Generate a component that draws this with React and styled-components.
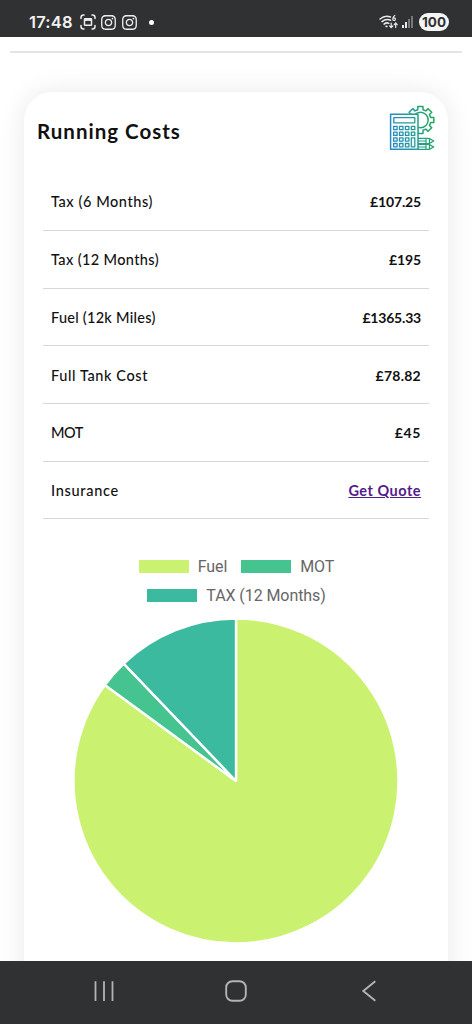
import React from 'react';
import styled, { createGlobalStyle } from 'styled-components';
import { FaInstagram } from 'react-icons/fa';

const costs = [
    { label: 'Tax (6 Months)', track: 0.57, value: '£107.25', valueTrack: -0.15 },
    { label: 'Tax (12 Months)', track: 0.37, value: '£195', valueTrack: -0.1 },
    { label: 'Fuel (12k Miles)', track: 0.26, value: '£1365.33', valueTrack: -0.2 },
    { label: 'Full Tank Cost', track: 0.6, value: '£78.82', valueTrack: 0.25 },
    { label: 'MOT', track: -0.5, value: '£45', valueTrack: 0.6 },
    { label: 'Insurance', track: 0.7, value: 'Get Quote', link: true },
];

const slices = [
    { label: 'Fuel', amount: 1365.33, color: '#caf270' },
    { label: 'MOT', amount: 45, color: '#45c490' },
    { label: 'TAX (12 Months)', amount: 195, color: '#3cba9f' },
];

const point = (cx, cy, r, a) => `${(cx + r * Math.sin(a)).toFixed(2)} ${(cy - r * Math.cos(a)).toFixed(2)}`;

const Pie = () => {
    const total = slices.reduce((sum, s) => sum + s.amount, 0);
    let start = 0;
    return (
        <PieSvg viewBox='0 0 326 326'>
            {slices.map((s) => {
                const end = start + (s.amount / total) * Math.PI * 2;
                const large = end - start > Math.PI ? 1 : 0;
                const d = `M163 163 L${point(163, 163, 162.5, start)} A162.5 162.5 0 ${large} 1 ${point(163, 163, 162.5, end)} Z`;
                start = end;
                return <path key={s.label} d={d} fill={s.color} stroke='#fff' strokeWidth='2.4' strokeLinejoin='bevel' />;
            })}
        </PieSvg>
    );
};

// eight teeth, four points for each
const gearPath = () => {
    const pts = [];
    for (let i = 0; i < 8; i++) {
        const a = (i * Math.PI) / 4;
        pts.push(point(32.4, 16, 10.6, a - 0.25));
        pts.push(point(32.4, 16, 13.7, a - 0.19));
        pts.push(point(32.4, 16, 13.7, a + 0.19));
        pts.push(point(32.4, 16, 10.6, a + 0.25));
    }
    return `M${pts.join(' L')} Z`;
};

const CalculatorIcon = () => (
    <CalcSvg viewBox='0 0 48 48'>
        <defs>
            <linearGradient id='calc' gradientUnits='userSpaceOnUse' x1='2' y1='30' x2='46' y2='22'>
                <stop offset='0' stopColor='#2688c4' />
                <stop offset='0.55' stopColor='#229e96' />
                <stop offset='1' stopColor='#25a95c' />
            </linearGradient>
        </defs>
        <g fill='none' stroke='url(#calc)' strokeWidth='1.5' strokeLinejoin='round'>
            <path d={gearPath()} />
            <circle cx='32.4' cy='16' r='7.8' />
            <rect x='2.6' y='10.3' width='27.4' height='34.9' fill='#fff' />
            <rect x='5.8' y='13.6' width='21' height='5.2' strokeWidth='1.3' />
            {[0, 1, 2, 3].map((r) => [0, 1, 2, 3].map((c) => (
                c === 3 && r > 1 ? null :
                    <rect key={`${r}-${c}`} x={5.6 + c * 5.9} y={22.4 + r * 5.7} width='3.5' height='3.3' strokeWidth='1.3' />
            )))}
            <rect x='23.3' y='33.8' width='3.5' height='9' strokeWidth='1.3' />
            <path d='M30 34.4 H41 L45.8 37 L41 39.6 H30 M30 37 H38 M38 34.4 V39.6 M41.4 34.8 V39.2' strokeWidth='1.2' />
            <path d='M30 40.4 H41 L45.8 43 L41 45.4 H30 M30 43 H38 M38 40.4 V45.4 M41.4 40.8 V45' strokeWidth='1.2' />
        </g>
    </CalcSvg>
);

const App = () => {
    return (
        <Screen>
            <GlobalStyle />
            <StatusBar>
                <Time>17:48</Time>
                <StatusIcons>
                    <svg width='16' height='16' viewBox='0 0 16 16' fill='none' stroke='#eee' strokeWidth='1.5' strokeLinecap='round'>
                        <path d='M1 4.5 V3.5 Q1 1 3.5 1 H4 M12 1 H12.5 Q15 1 15 3.5 V4.5 M15 11.5 V12.5 Q15 15 12.5 15 H12 M4 15 H3.5 Q1 15 1 12.5 V11.5' />
                        <path d='M5 4.7 H11 Q11.5 4.7 11.5 5.2 V10.8 Q11.5 11.3 11 11.3 H5 Q4.5 11.3 4.5 10.8 V5.2 Q4.5 4.7 5 4.7 Z' />
                        <path d='M5 6 V5 H11 V6 Z' fill='#eee' strokeWidth='1' />
                    </svg>
                    <Insta />
                    <Insta />
                </StatusIcons>
                <Dot />
                <Spacer />
                <svg width='20' height='16' viewBox='0 0 20 16' fill='none' stroke='#e8e8e8' strokeWidth='1.5' strokeLinecap='round'>
                    <path d='M1 5 Q6 0.6 11.5 3 M3 7.6 Q7 4.2 11.6 6.2 M5.1 10.1 Q7.5 8.1 9.8 9.4' />
                    <path d='M7.2 12.3 H7.8' strokeWidth='1.8' />
                    <path d='M15.8 1.4 Q13.8 2.6 13.8 5 M13.8 5.2 A1.3 1.3 0 1 0 16.4 5.2 A1.3 1.3 0 1 0 13.8 5.2' strokeWidth='1.2' />
                    <path d='M12.2 9 V13.4 M10.7 12 L12.2 13.6 L13.7 12 M16.7 13.6 V9.2 M15.2 10.7 L16.7 9 L18.2 10.7' strokeWidth='1.2' />
                </svg>
                <Signal>
                    <Bar $h={3} />
                    <Bar $h={6} />
                    <Bar $h={9} $off />
                    <Bar $h={12} $off />
                </Signal>
                <Battery>100</Battery>
            </StatusBar>
            <Content>
                <Divider />
                <Card>
                    <CardHead>
                        <Title>Running Costs</Title>
                        <CalculatorIcon />
                    </CardHead>
                    <Rows>
                        {costs.map((c) => (
                            <Row key={c.label}>
                                <Label $track={c.track}>{c.label}</Label>
                                {c.link ? <Quote href='#'>{c.value}</Quote> : <Value $track={c.valueTrack}>{c.value}</Value>}
                            </Row>
                        ))}
                    </Rows>
                    <Legend>
                        {slices.map((s) => (
                            <LegendItem key={s.label}><Swatch $color={s.color} />{s.label}</LegendItem>
                        ))}
                    </Legend>
                    <Pie />
                </Card>
            </Content>
            <NavBar>
                <svg width='22' height='22' viewBox='0 0 22 22' stroke='#b4b4b5' strokeWidth='1.8'>
                    <path d='M2.5 1.2 V21 M11 1.2 V21 M19.5 1.2 V21' />
                </svg>
                <svg width='22' height='22' viewBox='0 0 22 22' fill='none' stroke='#b4b4b5' strokeWidth='1.9'>
                    <rect x='1.2' y='1.2' width='19.6' height='19.6' rx='6.2' />
                </svg>
                <svg width='22' height='22' viewBox='0 0 22 22' fill='none' stroke='#b4b4b5' strokeWidth='1.9'>
                    <path d='M17.3 1.2 L5.3 11 L17.3 20.8' />
                </svg>
            </NavBar>
        </Screen>
    );
};

export default App;

const GlobalStyle = createGlobalStyle`
    *{
        box-sizing: border-box;
    }
    body{
        margin: 0;
        background-color: #fff;
    }
`;
const Screen = styled.div`
    width: 472px;
    height: 1024px;
    display: flex;
    flex-direction: column;
    overflow: hidden;
    font-family: Lato, "Open Sans", sans-serif;
    color: #111;
`;
const StatusBar = styled.div`
    height: 37px;
    flex: none;
    display: flex;
    align-items: center;
    padding: 7px 23px 0 29px;
    background-color: #303133;
    color: #f2f2f2;
`;
const Time = styled.div`
    width: 51px;
    font-family: Inter, sans-serif;
    font-size: 16.5px;
    font-weight: 600;
    letter-spacing: 0.2px;
`;
const StatusIcons = styled.div`
    display: flex;
    gap: 4px;
    align-items: center;
`;
const Insta = styled(FaInstagram)`
    width: 17px;
    height: 17px;
    color: #eee;
`;
const Dot = styled.div`
    width: 5px;
    height: 5px;
    margin-left: 11px;
    border-radius: 50%;
    background-color: #fff;
`;
const Spacer = styled.div`
    flex: 1;
`;
const Signal = styled.div`
    display: flex;
    align-items: flex-end;
    gap: 1px;
    margin: 0 6px 0 3px;
`;
const Bar = styled.div`
    width: 2px;
    height: ${(p) => p.$h}px;
    background-color: ${(p) => (p.$off ? '#77787a' : '#e8e8e8')};
`;
const Battery = styled.div`
    width: 30px;
    height: 18px;
    border-radius: 9px;
    background-color: #f5f5f5;
    color: #303133;
    font-family: Inter, sans-serif;
    font-size: 13.5px;
    font-weight: 700;
    line-height: 18px;
    text-align: center;
`;
const Content = styled.div`
    flex: 1;
    min-height: 0;
    overflow: hidden;
    padding: 14px 10px 0;
`;
const Divider = styled.div`
    height: 2px;
    background-color: #e4e4e4;
`;
const Card = styled.div`
    height: 940px;
    margin: 39px 14px 0;
    padding-top: 12px;
    border-radius: 28px;
    background-color: #fff;
    box-shadow: 0 0 28px rgba(0, 0, 0, 0.09);
`;
const CardHead = styled.div`
    display: flex;
    justify-content: space-between;
    align-items: flex-start;
    height: 69.3px;
    padding: 0 12px 0 13px;
`;
const Title = styled.div`
    padding-top: 14px;
    font-size: 20.5px;
    font-weight: 700;
    line-height: 26px;
    letter-spacing: 1px;
    white-space: nowrap;
`;
const CalcSvg = styled.svg`
    width: 48px;
    height: 48px;
`;
const Rows = styled.div`
    padding: 0 19px;
`;
const Row = styled.div`
    display: flex;
    justify-content: space-between;
    align-items: center;
    height: 57.7px;
    padding: 0.6px 8px 0;
    border-bottom: 1px solid #d6d6d6;
    font-size: 14.5px;
`;
const Label = styled.div`
    font-weight: 500;
    letter-spacing: ${(p) => p.$track}px;
`;
const Value = styled.div`
    font-size: 14px;
    font-weight: 700;
    letter-spacing: ${(p) => p.$track}px;
`;
const Quote = styled.a`
    color: #551a8b;
    font-weight: 700;
    letter-spacing: 0.5px;
    text-decoration: underline;
`;
const Legend = styled.div`
    display: flex;
    flex-wrap: wrap;
    justify-content: center;
    column-gap: 14px;
    width: 240px;
    margin: 32.4px auto 0;
    padding-left: 1px;
    color: #666;
    font-family: Roboto, sans-serif;
    font-size: 16px;
`;
const LegendItem = styled.div`
    display: flex;
    align-items: center;
    height: 29px;
    gap: 9px;
    letter-spacing: -0.08px;
`;
const Swatch = styled.div`
    width: 50px;
    height: 13px;
    background-color: ${(p) => p.$color};
`;
const PieSvg = styled.svg`
    display: block;
    width: 326px;
    height: 326px;
    margin: 8px auto 0;
`;
const NavBar = styled.div`
    height: 63px;
    flex: none;
    display: flex;
    justify-content: space-between;
    align-items: center;
    padding: 0 92.5px 3px;
    background-color: #303133;
`;
